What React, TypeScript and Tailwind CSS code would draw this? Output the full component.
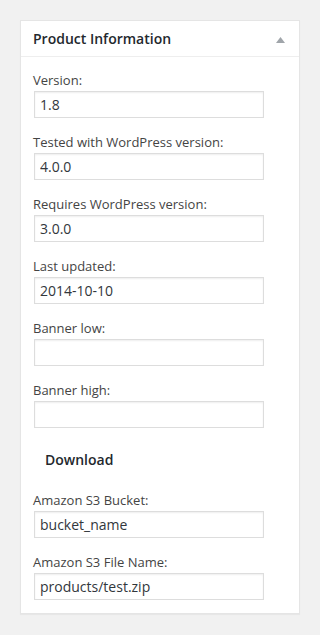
import React from "react";

const font = { fontFamily: '"Open Sans", "Noto Sans", sans-serif' };

function Field({ label, value }: { label: string; value: string }) {
  return (
    <div className="flex flex-col mb-[14px]">
      <div className="h-[20px] leading-[20px] text-[13px] text-[#444]">{label}</div>
      <input
        readOnly
        value={value}
        className="mt-px ml-px w-[230px] h-[27px] border border-[#dddddd] bg-white px-[5px] text-[14px] text-[#32373c] outline-none shadow-[inset_0_1px_2px_rgba(0,0,0,0.07)]"
        style={font}
      />
    </div>
  );
}

export default function App() {
  return (
    <div className="min-h-[635px] w-[320px] bg-[#f1f1f1] pt-[20px] pl-[20px]" style={font}>
      <div className="w-[280px] bg-white border border-[#e5e5e5] shadow-[0_1px_1px_rgba(0,0,0,0.04)]">
        <div className="h-[36px] flex items-center justify-between pl-[12px] pr-[14px] border-b border-[#eeeeee]">
          <span className="text-[14px] font-semibold text-[#23282d] leading-[20px]">Product Information</span>
          <svg width="9" height="6" viewBox="0 0 9 6" className="mt-[2px]">
            <polygon points="4.5,0 9,6 0,6" fill="#a0a5aa" />
          </svg>
        </div>
        <div className="pl-[12px] pt-[13px] pb-[0px]">
          <Field label="Version:" value="1.8" />
          <Field label="Tested with WordPress version:" value="4.0.0" />
          <Field label="Requires WordPress version:" value="3.0.0" />
          <Field label="Last updated:" value="2014-10-10" />
          <Field label="Banner low:" value="" />
          <div className="flex flex-col">
            <div className="h-[20px] leading-[20px] text-[13px] text-[#444]">Banner high:</div>
            <input
              readOnly
              value=""
              className="mt-px ml-px w-[230px] h-[27px] border border-[#dddddd] bg-white px-[5px] text-[14px] outline-none shadow-[inset_0_1px_2px_rgba(0,0,0,0.07)]"
              style={font}
            />
          </div>
          <div className="mt-[22px] mb-[20px] pl-[12px] h-[20px] leading-[20px] text-[14px] font-semibold text-[#23282d]">
            Download
          </div>
          <Field label="Amazon S3 Bucket:" value="bucket_name" />
          <div className="flex flex-col pb-[13px]">
            <div className="h-[20px] leading-[20px] text-[13px] text-[#444]">Amazon S3 File Name:</div>
            <input
              readOnly
              value="products/test.zip"
              className="mt-px ml-px w-[230px] h-[27px] border border-[#dddddd] bg-white px-[5px] text-[14px] text-[#32373c] outline-none shadow-[inset_0_1px_2px_rgba(0,0,0,0.07)]"
              style={font}
            />
          </div>
        </div>
      </div>
    </div>
  );
}
